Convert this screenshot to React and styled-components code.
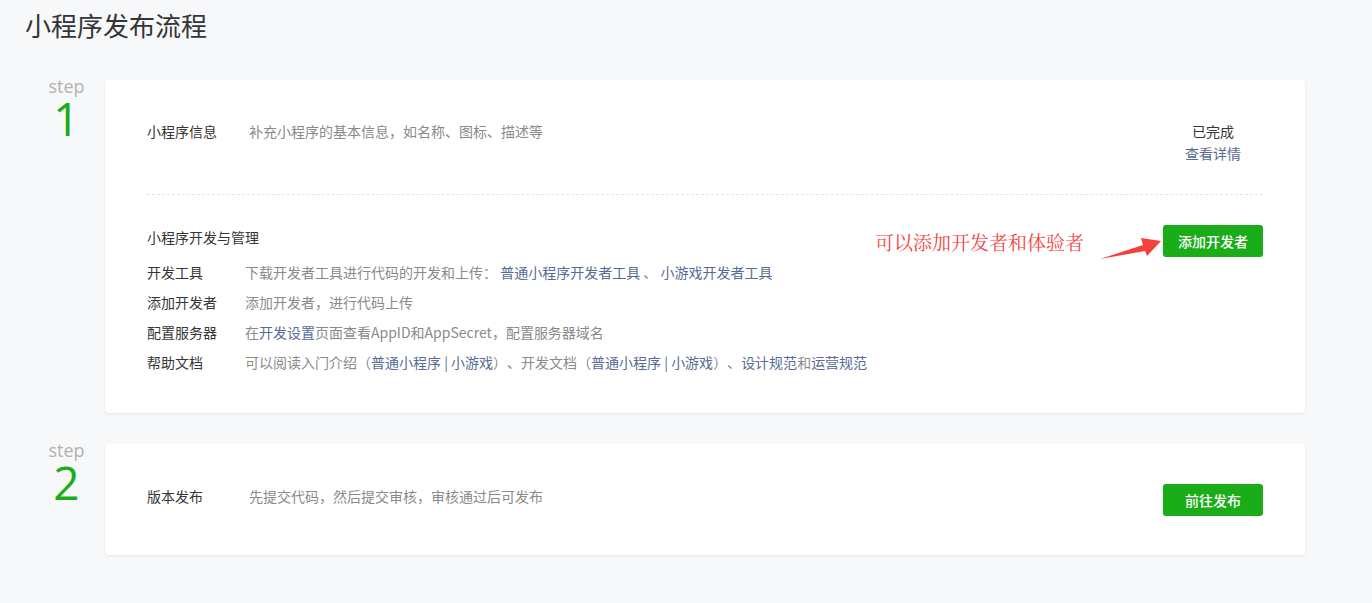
import React from "react";
import styled, { createGlobalStyle } from "styled-components";

const GlobalStyle = createGlobalStyle`
  html, body { margin: 0; padding: 0; background: #f7f8fa; }
  body {
    font-family: "Noto Sans CJK SC", "Noto Sans", sans-serif;
    color: #353535;
    text-spacing-trim: space-all;
  }
`;

const Page = styled.div`
  padding: 7px 67px 40px 25px;
  min-height: 555px;
`;

const Title = styled.h1`
  margin: 0;
  font-size: 26px;
  font-weight: 400;
  line-height: 36px;
  color: #353535;
`;

const Steps = styled.div`
  display: flex;
  flex-direction: column;
  gap: 31px;
  margin-top: 37px;
`;

const StepRow = styled.div`
  display: flex;
  align-items: flex-start;
`;

const StepMark = styled.div`
  width: 80px;
  box-sizing: border-box;
  padding-left: 3px;
  flex: none;
  margin-top: -3px;
  display: flex;
  flex-direction: column;
  align-items: center;
  font-family: "Open Sans", "Noto Sans", sans-serif;
`;

const StepWord = styled.span`
  font-size: 18px;
  line-height: 18px;
  color: #b2b2b2;
`;

const StepNum = styled.span`
  font-size: 46px;
  line-height: 46px;
  color: #1aad19;
  font-weight: 400;
`;

const Card = styled.div`
  flex: 1;
  background: #fff;
  border-radius: 4px;
  box-shadow: 0 1px 3px rgba(0, 0, 0, 0.08);
  padding: ${(p) => p.$pad || "40px 42px 36px"};
`;

const InfoRow = styled.div`
  display: flex;
  align-items: flex-start;
  justify-content: space-between;
`;

const Line = styled.div`
  display: flex;
  font-size: 14px;
  line-height: ${(p) => p.$lh || 30}px;
`;

const Label = styled.span`
  width: ${(p) => p.$w || 98}px;
  flex: none;
  color: #353535;
`;

const Desc = styled.span`
  color: #8a8a8a;
  white-space: nowrap;
`;

const Link = styled.a`
  color: #576b95;
  text-decoration: none;
  cursor: pointer;
`;

const Status = styled.div`
  width: 100px;
  display: flex;
  flex-direction: column;
  align-items: center;
  font-size: 14px;
  line-height: 22px;
`;

const Done = styled.span`
  color: #353535;
`;

const Divider = styled.div`
  border-top: 1px dashed #e5e5e5;
  margin: 30px 0 30px;
`;

const Header = styled.div`
  position: relative;
  display: flex;
  justify-content: space-between;
  align-items: flex-start;
`;

const SectionTitle = styled.span`
  font-size: 14px;
  line-height: 24px;
  color: #353535;
`;

const Button = styled.button`
  width: 100px;
  height: 32px;
  border: none;
  border-radius: 3px;
  background: #1aad19;
  color: #fff;
  font-family: "Noto Sans CJK SC", sans-serif;
  font-size: 14px;
  font-weight: 500;
  cursor: pointer;
  padding: 0;
`;

const Annotation = styled.div`
  position: absolute;
  right: 100px;
  top: 0;
  height: 32px;
  display: flex;
  align-items: center;
  gap: 13px;
  pointer-events: none;
`;

const Note = styled.span`
  font-family: "Noto Serif CJK SC", "Liberation Serif", "Noto Sans CJK SC", serif;
  font-size: 19px;
  color: #f4433f;
  white-space: nowrap;
`;

const Arrow = () => (
  <svg width="66" height="30" viewBox="0 0 66 30" style={{ marginTop: 14 }}>
    <polygon points="3,26 46,12 44,5 64,8 50,23 48,18" fill="#f5403c" />
  </svg>
);

export default function App() {
  return (
    <>
      <GlobalStyle />
      <Page>
        <Title>小程序发布流程</Title>
        <Steps>
          <StepRow>
            <StepMark>
              <StepWord>step</StepWord>
              <StepNum>1</StepNum>
            </StepMark>
            <Card>
              <InfoRow>
                <Line $lh={22}>
                  <Label $w={102}>小程序信息</Label>
                  <Desc>补充小程序的基本信息，如名称、图标、描述等</Desc>
                </Line>
                <Status>
                  <Done>已完成</Done>
                  <Link>查看详情</Link>
                </Status>
              </InfoRow>
              <Divider />
              <Header>
                <SectionTitle>小程序开发与管理</SectionTitle>
                <Annotation>
                  <Note>可以添加开发者和体验者</Note>
                  <Arrow />
                </Annotation>
                <Button>添加开发者</Button>
              </Header>
              <Line>
                <Label>开发工具</Label>
                <Desc>
                  下载开发者工具进行代码的开发和上传：&nbsp;<Link>普通小程序开发者工具</Link>&nbsp;、&nbsp;
                  <Link>小游戏开发者工具</Link>
                </Desc>
              </Line>
              <Line>
                <Label>添加开发者</Label>
                <Desc>添加开发者，进行代码上传</Desc>
              </Line>
              <Line>
                <Label>配置服务器</Label>
                <Desc>
                  在<Link>开发设置</Link>页面查看AppID和AppSecret，配置服务器域名
                </Desc>
              </Line>
              <Line>
                <Label>帮助文档</Label>
                <Desc>
                  可以阅读入门介绍（<Link>普通小程序</Link> <Link>|</Link> <Link>小游戏</Link>）、开发文档（
                  <Link>普通小程序</Link> <Link>|</Link> <Link>小游戏</Link>）、<Link>设计规范</Link>和
                  <Link>运营规范</Link>
                </Desc>
              </Line>
            </Card>
          </StepRow>
          <StepRow>
            <StepMark>
              <StepWord>step</StepWord>
              <StepNum>2</StepNum>
            </StepMark>
            <Card $pad="40px 42px 39px">
              <Header>
                <Line $lh={24}>
                  <Label $w={102}>版本发布</Label>
                  <Desc>先提交代码，然后提交审核，审核通过后可发布</Desc>
                </Line>
                <Button>前往发布</Button>
              </Header>
            </Card>
          </StepRow>
        </Steps>
      </Page>
    </>
  );
}
